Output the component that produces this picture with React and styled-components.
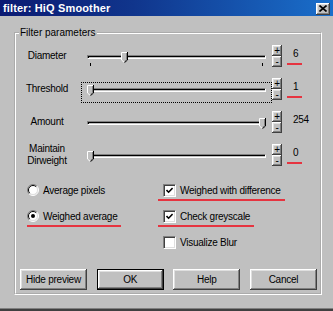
import React from 'react';
import styled, { createGlobalStyle, css } from 'styled-components';

const GlobalStyle = createGlobalStyle`
  html, body { margin: 0; padding: 0; background: #c0c0c0; }
  body { font-family: "Liberation Sans", Arial, sans-serif; }
`;

const RED = '#e63440';
const FONT = `"Liberation Sans", Arial, sans-serif`;

const raised = css`
  background: #c0c0c0;
  box-shadow: inset -1px -1px 0 #404040, inset 1px 1px 0 #ffffff,
    inset -2px -2px 0 #808080, inset 2px 2px 0 #dfdfdf;
`;

const Window = styled.div`
  width: 333px;
  height: 311px;
  box-sizing: border-box;
  background: #c0c0c0;
  display: flex;
  flex-direction: column;
  border-bottom: 2px solid #404040;
  box-shadow: inset 0 -1px 0 #808080;
  overflow: hidden;
  font: 10px ${FONT};
  letter-spacing: -0.25px;
  color: #000;
`;

const TitleBar = styled.div`
  height: 16px;
  flex: none;
  display: flex;
  align-items: center;
  justify-content: space-between;
  padding: 0 3px;
  background: linear-gradient(to right, #0b1a72 0%, #10358c 40%, #1a6fcb 100%);
`;

const Title = styled.span`
  color: #fff;
  font: bold 11px ${FONT};
  letter-spacing: 0.15px;
  white-space: nowrap;
`;

const CloseButton = styled.div`
  ${raised};
  width: 14px;
  height: 12px;
  margin-top: 1px;
  display: flex;
  align-items: center;
  justify-content: center;
`;

const Body = styled.div`
  flex: 1;
  padding: 10px 11px 0 14px;
`;

const Group = styled.fieldset`
  margin: 0;
  padding: 6px 4px 3px 4px;
  border: 2px groove #ffffff;
  display: flex;
  flex-direction: column;
  min-width: 0;
`;

const Legend = styled.legend`
  padding: 0 1px;
  margin-left: -1px;
  font: 10px/13px ${FONT};
  letter-spacing: 0;
`;

const ParamGrid = styled.div`
  display: grid;
  grid-template-columns: 61px 191px 15px 15px;
  grid-auto-rows: 22px;
  row-gap: 11px;
`;

const Label = styled.div`
  padding-right: 7px;
  display: flex;
  flex-direction: column;
  justify-content: center;
  align-items: center;
  text-align: center;
  line-height: 12px;
`;

const SliderArea = styled.div`
  position: relative;
  box-sizing: border-box;
  height: 21px;
  margin-top: 4px;
  border: 1px dotted ${(p) => (p.$focused ? '#000' : 'transparent')};
`;

const Track = styled.div`
  height: 4px;
  margin: 5px 5px 0;
  box-sizing: border-box;
  border-top: 1px solid #808080;
  border-left: 1px solid #808080;
  border-bottom: 1px solid #ffffff;
  border-right: 1px solid #ffffff;
  background: #c0c0c0;
  box-shadow: inset 0 1px 0 #000, inset 1px 0 0 #000;
`;

const Ticks = styled.div`
  display: flex;
  justify-content: space-between;
  margin: 4px 8px 0;
`;

const Tick = styled.span`
  width: 1px;
  height: 3px;
  background: #000;
`;

const Thumb = styled.svg`
  position: absolute;
  top: 2px;
`;

const SpinStack = styled.div`
  display: flex;
  flex-direction: column;
  width: 10px;
`;

const SpinButton = styled.div`
  ${raised};
  height: 11px;
  display: flex;
  align-items: center;
  justify-content: center;
  font: 10px/10px ${FONT};
`;

const Value = styled.div`
  box-sizing: border-box;
  height: 20px;
  width: ${(p) => (p.$marked ? '15px' : 'auto')};
  padding-left: 6px;
  line-height: 18px;
  white-space: nowrap;
  border-bottom: 2px solid ${(p) => (p.$marked ? RED : 'transparent')};
`;

const Options = styled.div`
  display: grid;
  grid-template-columns: 131px auto;
  grid-auto-rows: 20px;
  row-gap: 6px;
  margin: 15px 0 0 7px;
`;

const Option = styled.div`
  justify-self: start;
  display: inline-flex;
  align-items: center;
  gap: 4px;
  box-sizing: border-box;
  height: 20px;
  padding: 0 4px 0 ${(p) => (p.$radio ? '0' : '5px')};
  border-bottom: 2px solid ${(p) => (p.$marked ? RED : 'transparent')};
  white-space: nowrap;
`;

const CheckBox = styled.span`
  box-sizing: border-box;
  width: 13px;
  height: 13px;
  flex: none;
  display: flex;
  align-items: center;
  justify-content: center;
  background: #fff;
  border-top: 1px solid #808080;
  border-left: 1px solid #808080;
  border-bottom: 1px solid #fff;
  border-right: 1px solid #fff;
  box-shadow: inset 1px 1px 0 #404040, inset -1px -1px 0 #dfdfdf;
`;

const ButtonRow = styled.div`
  display: flex;
  justify-content: space-between;
  margin-top: 16px;
  width: 297px;
`;

const Button = styled.div`
  ${raised};
  box-sizing: border-box;
  width: 67px;
  height: 21px;
  display: flex;
  align-items: center;
  justify-content: center;
  font: 10px ${FONT};
  letter-spacing: -0.25px;
  ${(p) =>
    p.$default &&
    css`
      border: 1px solid #000;
    `}
`;

function CloseIcon() {
  return (
    <svg width="8" height="7" viewBox="0 0 8 7">
      <path d="M0.5 0.5 L7.5 6.5 M7.5 0.5 L0.5 6.5" stroke="#000" strokeWidth="1.6" />
    </svg>
  );
}

function ThumbIcon({ left }) {
  return (
    <Thumb width="7" height="11" viewBox="0 0 7 11" style={{ left }}>
      <path d="M0 0H7V8L3.5 11L0 8Z" fill="#c0c0c0" />
      <path d="M0.5 8V0.5H6" stroke="#fff" fill="none" />
      <path d="M6.5 0V8L3.5 10.6" stroke="#000" fill="none" />
      <path d="M5.5 1V7.6L3.5 9.4" stroke="#808080" fill="none" />
      <path d="M0.5 8L3 10.2" stroke="#fff" fill="none" />
    </Thumb>
  );
}

function Radio({ checked }) {
  return (
    <svg width="12" height="12" viewBox="0 0 12 12" style={{ flex: 'none' }}>
      <circle cx="6" cy="6" r="5" fill="#fff" />
      <path d="M2.1 9.9A5.5 5.5 0 0 1 9.9 2.1" stroke="#808080" fill="none" />
      <path d="M9.9 2.1A5.5 5.5 0 0 1 2.1 9.9" stroke="#fff" fill="none" />
      <path d="M2.8 9.2A4.5 4.5 0 0 1 9.2 2.8" stroke="#000" fill="none" />
      <path d="M9.2 2.8A4.5 4.5 0 0 1 2.8 9.2" stroke="#dfdfdf" fill="none" />
      {checked && <circle cx="6" cy="6" r="2" fill="#000" />}
    </svg>
  );
}

function Check({ checked }) {
  return (
    <CheckBox>
      {checked && (
        <svg width="7" height="7" viewBox="0 0 7 7">
          <path d="M0.5 3 L2.6 5.2 L6.6 1" stroke="#000" strokeWidth="1.6" fill="none" />
        </svg>
      )}
    </CheckBox>
  );
}

const params = [
  { label: ['Diameter'], value: 6, min: 1, max: 26, ticks: true, marked: true },
  { label: ['Threshold'], value: 1, min: 1, max: 255, focused: true, marked: true },
  { label: ['Amount'], value: 254, min: 0, max: 254 },
  { label: ['Maintain', 'Dirweight'], value: 0, min: 0, max: 100, marked: true },
];

function ParamRow({ p }) {
  const frac = (p.value - p.min) / (p.max - p.min);
  const left = 5 + frac * 172;
  return (
    <>
      <Label>
        {p.label.map((l) => (
          <span key={l}>{l}</span>
        ))}
      </Label>
      <SliderArea $focused={p.focused}>
        <Track />
        {p.ticks && (
          <Ticks>
            <Tick />
            <Tick />
          </Ticks>
        )}
        <ThumbIcon left={left} />
      </SliderArea>
      <SpinStack>
        <SpinButton>+</SpinButton>
        <SpinButton>-</SpinButton>
      </SpinStack>
      <Value $marked={p.marked}>{p.value}</Value>
    </>
  );
}

export default function App() {
  return (
    <>
      <GlobalStyle />
      <Window>
        <TitleBar>
          <Title>filter: HiQ Smoother</Title>
          <CloseButton>
            <CloseIcon />
          </CloseButton>
        </TitleBar>
        <Body>
          <Group>
            <Legend>Filter parameters</Legend>
            <ParamGrid>
              {params.map((p, i) => (
                <ParamRow key={i} p={p} />
              ))}
            </ParamGrid>
            <Options>
              <Option $radio>
                <Radio />
                Average pixels
              </Option>
              <Option $marked>
                <Check checked />
                Weighed with difference
              </Option>
              <Option $radio $marked>
                <Radio checked />
                Weighed average
              </Option>
              <Option $marked>
                <Check checked />
                Check greyscale
              </Option>
              <span />
              <Option>
                <Check />
                Visualize Blur
              </Option>
            </Options>
            <ButtonRow>
              <Button>Hide preview</Button>
              <Button $default>OK</Button>
              <Button>Help</Button>
              <Button>Cancel</Button>
            </ButtonRow>
          </Group>
        </Body>
      </Window>
    </>
  );
}
